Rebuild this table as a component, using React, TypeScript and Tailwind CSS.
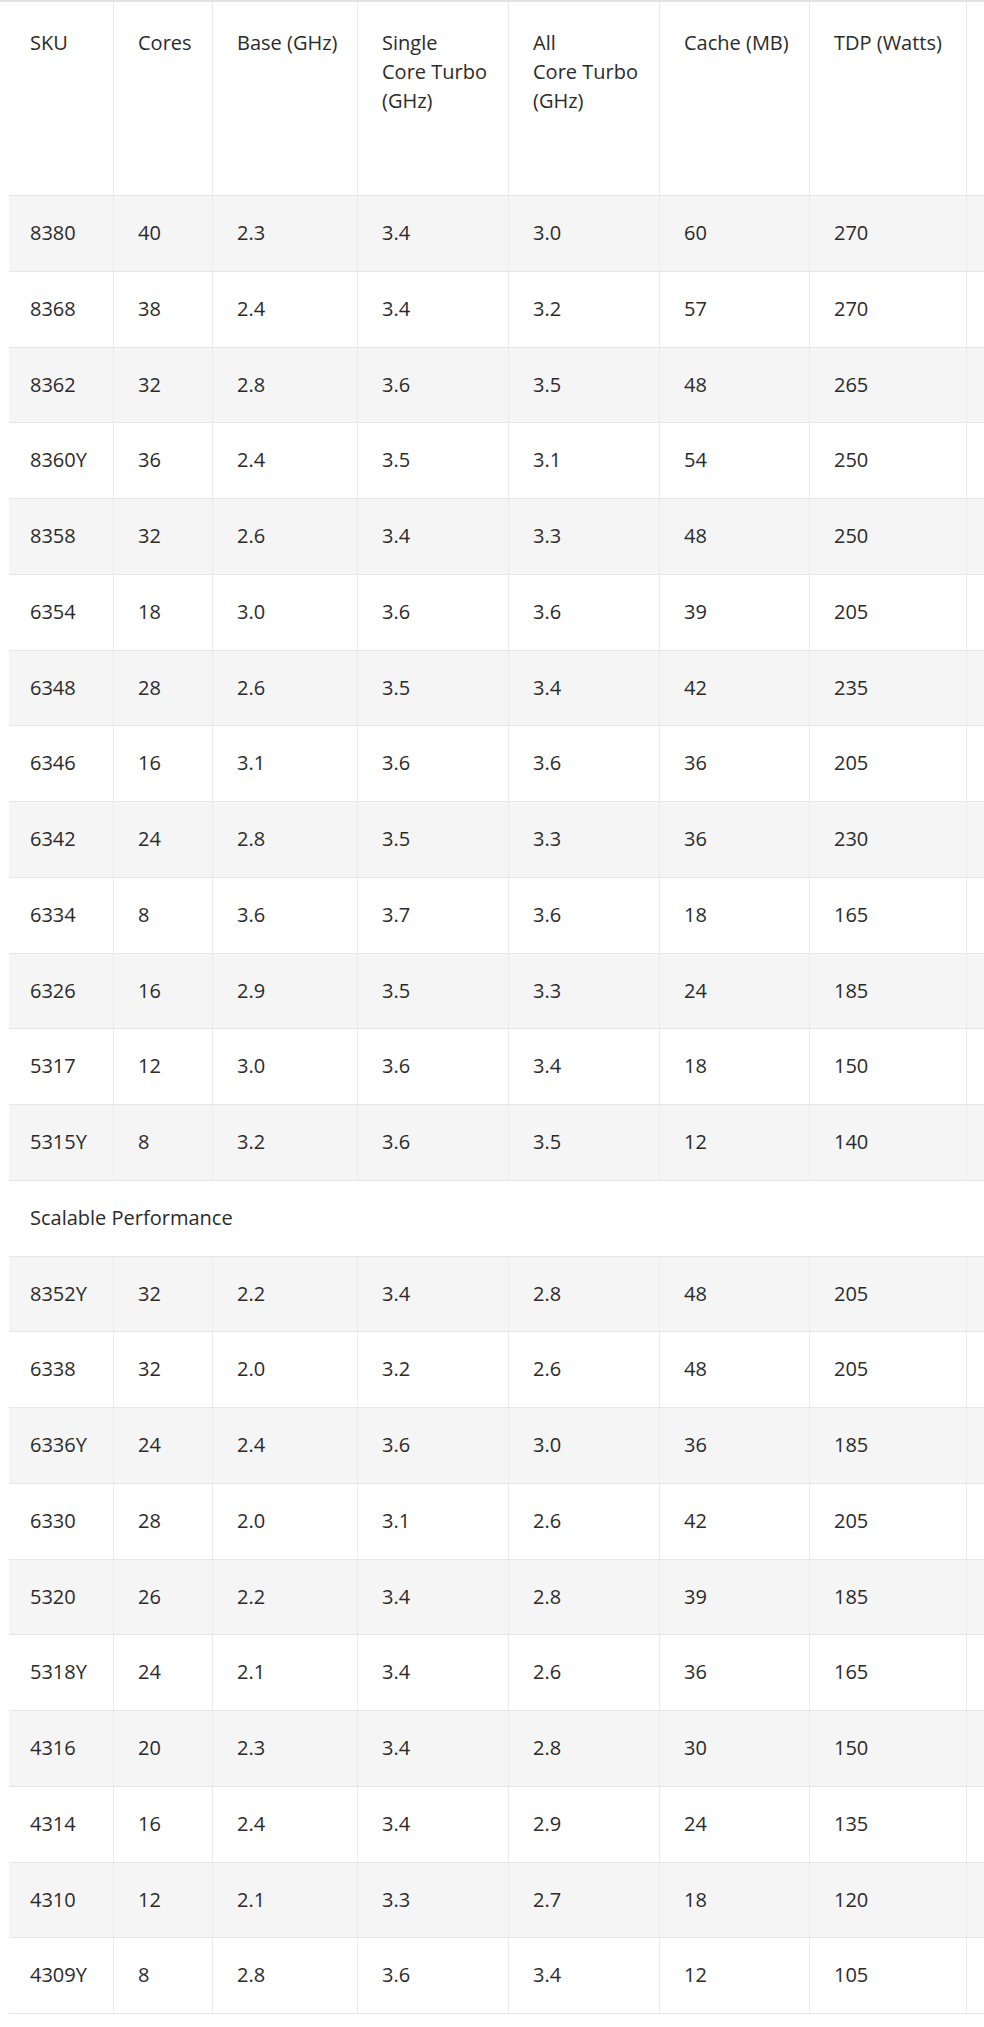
import React from 'react';

type Row = [string, string, string, string, string, string, string];

const performance: Row[] = [
  ['8380', '40', '2.3', '3.4', '3.0', '60', '270'],
  ['8368', '38', '2.4', '3.4', '3.2', '57', '270'],
  ['8362', '32', '2.8', '3.6', '3.5', '48', '265'],
  ['8360Y', '36', '2.4', '3.5', '3.1', '54', '250'],
  ['8358', '32', '2.6', '3.4', '3.3', '48', '250'],
  ['6354', '18', '3.0', '3.6', '3.6', '39', '205'],
  ['6348', '28', '2.6', '3.5', '3.4', '42', '235'],
  ['6346', '16', '3.1', '3.6', '3.6', '36', '205'],
  ['6342', '24', '2.8', '3.5', '3.3', '36', '230'],
  ['6334', '8', '3.6', '3.7', '3.6', '18', '165'],
  ['6326', '16', '2.9', '3.5', '3.3', '24', '185'],
  ['5317', '12', '3.0', '3.6', '3.4', '18', '150'],
  ['5315Y', '8', '3.2', '3.6', '3.5', '12', '140'],
];

const scalable: Row[] = [
  ['8352Y', '32', '2.2', '3.4', '2.8', '48', '205'],
  ['6338', '32', '2.0', '3.2', '2.6', '48', '205'],
  ['6336Y', '24', '2.4', '3.6', '3.0', '36', '185'],
  ['6330', '28', '2.0', '3.1', '2.6', '42', '205'],
  ['5320', '26', '2.2', '3.4', '2.8', '39', '185'],
  ['5318Y', '24', '2.1', '3.4', '2.6', '36', '165'],
  ['4316', '20', '2.3', '3.4', '2.8', '30', '150'],
  ['4314', '16', '2.4', '3.4', '2.9', '24', '135'],
  ['4310', '12', '2.1', '3.3', '2.7', '18', '120'],
  ['4309Y', '8', '2.8', '3.6', '3.4', '12', '105'],
];

const cols = 'grid grid-cols-[105px_99px_145px_151px_151px_150px_157px_1fr]';

function DataRow({ row, shaded }: { row: Row; shaded: boolean }) {
  return (
    <div className={`${cols} h-[75.75px] border-t border-[#e6e6e6] ${shaded ? 'bg-[#f5f5f5]' : 'bg-white'}`}>
      {row.map((v, i) => (
        <div
          key={i}
          className={`flex items-center border-r border-[#ebebeb] ${i === 0 ? 'pl-[21px]' : 'pl-[24px]'}`}
        >
          {v}
        </div>
      ))}
      <div />
    </div>
  );
}

export default function App() {
  const headers: React.ReactNode[] = [
    'SKU',
    'Cores',
    'Base (GHz)',
    <>Single<br />Core Turbo<br />(GHz)</>,
    <>All<br />Core Turbo<br />(GHz)</>,
    'Cache (MB)',
    'TDP (Watts)',
  ];

  return (
    <div className="w-[984px] min-h-[2027px] bg-white font-['Open_Sans',sans-serif] text-[20px] leading-[28.7px] text-[#2b2b2b]">
      <div className="border-t-2 border-[#e3e3e3] overflow-hidden">
        <div className="ml-[9px]">
          {/* header */}
          <div className={`${cols} h-[193px]`}>
            {headers.map((h, i) => (
              <div
                key={i}
                className={`border-r border-[#ebebeb] pt-[26px] leading-[29px] whitespace-nowrap ${i === 0 ? 'pl-[21px]' : 'pl-[24px]'}`}
              >
                {h}
              </div>
            ))}
            <div />
          </div>

          <div className="border-b border-[#e6e6e6]">
            {performance.map((r, i) => (
              <DataRow key={r[0]} row={r} shaded={i % 2 === 0} />
            ))}

            <div className="h-[75.75px] border-t border-[#e6e6e6] bg-white flex items-center pl-[21px]">
              Scalable Performance
            </div>

            {scalable.map((r, i) => (
              <DataRow key={r[0]} row={r} shaded={i % 2 === 0} />
            ))}
          </div>
        </div>
      </div>
    </div>
  );
}
